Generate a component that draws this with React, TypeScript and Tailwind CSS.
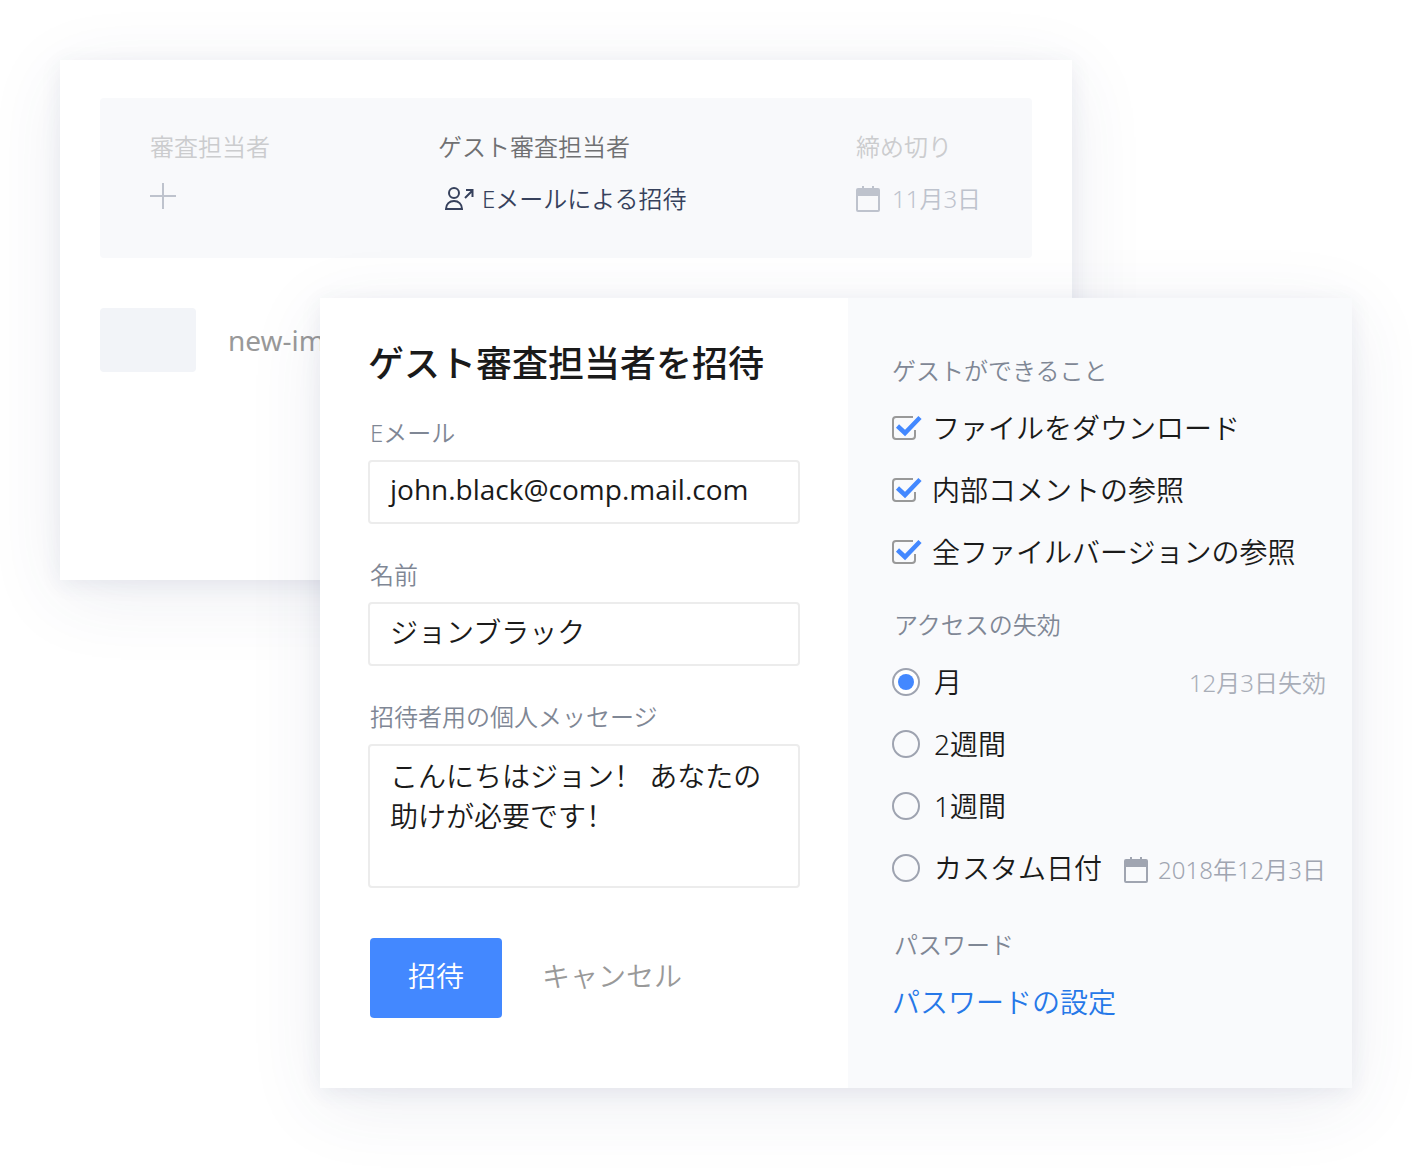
import { useState } from 'react';

interface FieldProps {
  id: string;
  label: string;
  children: React.ReactNode;
}

const permissions = ['ファイルをダウンロード', '内部コメントの参照', '全ファイルバージョンの参照'];

const inputClass =
  'block w-full rounded border-2 border-[#ececec] bg-white text-[28px] text-[#1a1a1a] outline-none focus:border-[#4388ff]';

function Field({ id, label, children }: FieldProps) {
  return (
    <div>
      <label htmlFor={id} className="mb-[11px] block pl-0.5 text-2xl leading-8 text-[#7f8795]">
        {label}
      </label>
      {children}
    </div>
  );
}

function CalendarIcon() {
  return (
    <svg width="24" height="28" viewBox="0 0 24 28" className="shrink-0" aria-hidden="true">
      <path d="M6 1h2v3H6zM16 1h2v3h-2z" fill="currentColor" />
      <path
        d="M2 3h20a2 2 0 0 1 2 2v20a2 2 0 0 1-2 2H2a2 2 0 0 1-2-2V5a2 2 0 0 1 2-2zM2 11v14h20V11z"
        fill="currentColor"
        fillRule="evenodd"
      />
    </svg>
  );
}

function InviteIcon() {
  return (
    <svg width="29" height="24" viewBox="0 0 29 24" fill="none" stroke="#36415c" strokeWidth="2" aria-hidden="true">
      <circle cx="9" cy="6" r="5" />
      <path d="M1 22c0-5 3.5-8 8-8s8 3 8 8z" />
      <path d="M20 11l7-7M21 3h6.5v7" />
    </svg>
  );
}

function Checkbox({ label }: { label: string }) {
  const [checked, setChecked] = useState(true);

  return (
    <label className="flex h-[62px] items-center gap-2.5 text-[28px] leading-10 text-[#1a1a1a]">
      <span className="grid shrink-0">
        <input
          type="checkbox"
          checked={checked}
          onChange={(e) => setChecked(e.target.checked)}
          className="col-start-1 row-start-1 h-6 w-[30px] appearance-none"
        />
        <svg
          width="30"
          height="24"
          viewBox="0 0 30 24"
          fill="none"
          className="pointer-events-none col-start-1 row-start-1 overflow-visible"
          aria-hidden="true"
        >
          {checked ? (
            <>
              <path d="M21 1H4a3 3 0 0 0-3 3v16a3 3 0 0 0 3 3h16a3 3 0 0 0 3-3v-6" stroke="#999" strokeWidth="2" />
              <path d="M5.5 10l7.5 7L28 1.5" stroke="#4388ff" strokeWidth="4.5" />
            </>
          ) : (
            <rect x="1" y="1" width="22" height="22" rx="3" stroke="#999" strokeWidth="2" />
          )}
        </svg>
      </span>
      {label}
    </label>
  );
}

function ExpiryOption({ label, value, defaultChecked }: { label: string; value: string; defaultChecked?: boolean }) {
  return (
    <label className="flex items-center gap-3.5 whitespace-nowrap">
      <input
        type="radio"
        name="expiry"
        value={value}
        defaultChecked={defaultChecked}
        className="grid size-7 shrink-0 appearance-none place-items-center rounded-full border-2 border-[#9ea3b0] checked:bg-white checked:before:size-4 checked:before:rounded-full checked:before:bg-[#4388ff]"
      />
      {label}
    </label>
  );
}

function ReviewCard() {
  return (
    <section className="col-start-1 row-start-1 mr-[280px] h-[520px] bg-white px-10 pt-[38px] shadow-[0_4px_20px_rgba(50,70,110,0.08),0_16px_72px_rgba(50,70,110,0.09)]">
      <div className="grid h-40 grid-cols-[288fr_418fr_176fr] rounded bg-[#f8f9fb] pt-[33px] pl-[50px] text-2xl leading-8 whitespace-nowrap">
        <div>
          <h2 className="text-[#cbccce]">審査担当者</h2>
          <button type="button" aria-label="審査担当者を追加" className="mt-5 block text-[#bec3cd]">
            <svg width="26" height="26" viewBox="0 0 26 26" stroke="currentColor" strokeWidth="2" aria-hidden="true">
              <path d="M13 0v26M0 13h26" />
            </svg>
          </button>
        </div>
        <div>
          <h2 className="text-[#6f7072]">ゲスト審査担当者</h2>
          <button type="button" className="mt-5 flex items-center gap-2 pl-[7px] text-[#36415c]">
            <InviteIcon />
            Eメールによる招待
          </button>
        </div>
        <div>
          <h2 className="text-[#cbccce]">締め切り</h2>
          <button type="button" className="mt-5 flex items-center gap-3 text-[#bec3cd]">
            <CalendarIcon />
            11月3日
          </button>
        </div>
      </div>
      <div className="mt-[50px] flex items-center gap-8">
        <div className="h-16 w-24 rounded bg-[#f2f4f8]" />
        <span className="text-[28px] leading-10 font-normal text-[#999]">new-im</span>
      </div>
    </section>
  );
}

export default function App() {
  return (
    <main
      lang="ja"
      className="mx-auto grid max-w-[1412px] px-[60px] pt-[60px] pb-[86px] font-['Noto_Sans','Noto_Sans_CJK_JP',sans-serif] font-[350]"
    >
      <ReviewCard />

      <form
        role="dialog"
        aria-labelledby="invite-title"
        onSubmit={(e) => e.preventDefault()}
        className="z-10 col-start-1 row-start-1 mt-[238px] ml-[260px] grid grid-cols-[528fr_504fr] bg-white shadow-[0_4px_20px_rgba(50,70,110,0.08),0_16px_72px_rgba(50,70,110,0.09)]"
      >
        <div className="px-12 pt-10 pb-[70px]">
          <h1 id="invite-title" className="text-4xl leading-[52px] font-medium whitespace-nowrap text-[#1a1a1a]">
            ゲスト審査担当者を招待
          </h1>
          <div className="mt-[27px] flex flex-col gap-[35px]">
            <Field id="email" label="Eメール">
              <input
                id="email"
                type="email"
                defaultValue="john.black@comp.mail.com"
                className={`${inputClass} h-16 px-3 pb-1.5 indent-2 font-['Open_Sans',sans-serif] font-normal`}
              />
            </Field>
            <Field id="name" label="名前">
              <input
                id="name"
                type="text"
                defaultValue="ジョンブラック"
                className={`${inputClass} h-16 px-3 pb-1.5 indent-2`}
              />
            </Field>
            <Field id="message" label="招待者用の個人メッセージ">
              <textarea
                id="message"
                lang="zh-CN"
                defaultValue="こんにちはジョン！ あなたの助けが必要です！"
                className={`${inputClass} h-36 resize-none px-5 pt-2.5 font-['Noto_Sans','Noto_Sans_CJK_SC',sans-serif] leading-10`}
              />
            </Field>
          </div>
          <div className="mt-[50px] flex items-center gap-10 pl-0.5 text-[28px] leading-10">
            <button type="submit" className="h-20 w-[132px] rounded bg-[#4388ff] pb-1 text-white">
              招待
            </button>
            <button type="button" className="pb-1 text-[#999]">
              キャンセル
            </button>
          </div>
        </div>

        <div className="bg-[#f9fafc] pt-[57px] pr-[26px] pl-11 text-[28px] leading-10 text-[#1a1a1a]">
          <fieldset>
            <legend className="mb-2.5 text-2xl leading-8 text-[#7f8795]">ゲストができること</legend>
            {permissions.map((label) => (
              <Checkbox key={label} label={label} />
            ))}
          </fieldset>
          <fieldset className="mt-[26px]">
            <legend className="mb-2.5 pl-0.5 text-2xl leading-8 text-[#7f8795]">アクセスの失効</legend>
            <div className="flex h-[62px] items-center justify-between">
              <ExpiryOption label="月" value="month" defaultChecked />
              <span className="pt-0.5 text-2xl text-[#a9aeb8]">12月3日失効</span>
            </div>
            <div className="flex h-[62px] items-center">
              <ExpiryOption label="2週間" value="two-weeks" />
            </div>
            <div className="flex h-[62px] items-center">
              <ExpiryOption label="1週間" value="one-week" />
            </div>
            <div className="flex h-[62px] items-center justify-between">
              <ExpiryOption label="カスタム日付" value="custom" />
              <button type="button" className="flex items-center gap-2.5 pt-1 text-2xl whitespace-nowrap text-[#a0a5b1]">
                <CalendarIcon />
                2018年12月3日
              </button>
            </div>
          </fieldset>
          <h2 className="mt-[30px] mb-2.5 pl-0.5 text-2xl leading-8 text-[#7f8795]">パスワード</h2>
          <a href="#password" className="flex h-[62px] items-center text-[#2678e8]">
            パスワードの設定
          </a>
        </div>
      </form>
    </main>
  );
}
